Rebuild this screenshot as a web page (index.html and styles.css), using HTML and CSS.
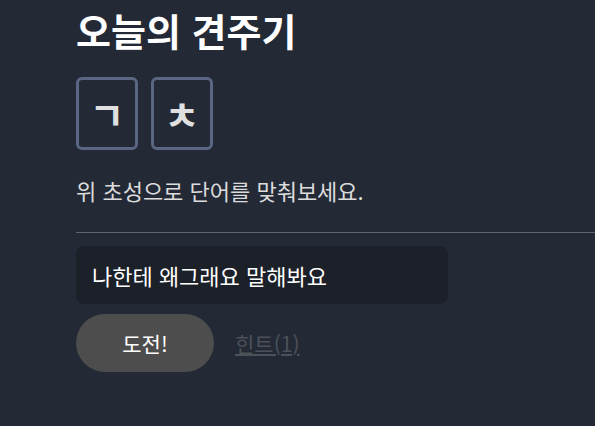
FILE: index.html
```html
<!DOCTYPE html>
<html lang="ko">
<head>
<meta charset="utf-8">
<link rel="stylesheet" href="styles.css">
</head>
<body>
<main class="page">
  <h1 class="title">오늘의 견주기</h1>
  <div class="tiles">
    <div class="tile">ㄱ</div>
    <div class="tile">ㅊ</div>
  </div>
  <p class="desc">위 초성으로 단어를 맞춰보세요.</p>
  <hr class="rule">
  <div class="answer">나한테 왜그래요 말해봐요</div>
  <div class="actions">
    <button class="go">도전!</button>
    <a class="hint">힌트(1)</a>
  </div>
</main>
</body>
</html>
```
FILE: styles.css
```css
html, body {
  margin: 0;
  padding: 0;
  background: #232a36;
  height: 100%;
  overflow: hidden;
}
body {
  font-family: "Noto Sans CJK KR", "Noto Sans", sans-serif;
  color: #e6e6e6;
}
.page {
  padding: 6px 0 0 76px;
  display: flex;
  flex-direction: column;
}
.title {
  margin: 0;
  font-size: 38px;
  line-height: 48px;
  font-weight: 700;
  color: #ffffff;
}
.tiles {
  display: flex;
  gap: 13px;
  margin-top: 23px;
}
.tile {
  box-sizing: border-box;
  width: 62px;
  height: 73px;
  border: 3px solid #5a6782;
  border-radius: 6px;
  display: flex;
  align-items: center;
  justify-content: center;
  font-size: 38px;
  line-height: 1;
  font-weight: 700;
  color: #e0e0e0;
}
.desc {
  margin: 25px 0 0;
  font-size: 22px;
  line-height: 30px;
  color: #dcdcdc;
}
.rule {
  margin: 27px 0 0;
  border: 0;
  height: 1px;
  background: #5a6577;
}
.answer {
  margin-top: 13px;
  width: 372px;
  height: 58px;
  box-sizing: border-box;
  background: #1b2029;
  border-radius: 8px;
  padding: 0 16px;
  display: flex;
  align-items: center;
  font-size: 22px;
  color: #ffffff;
}
.actions {
  margin-top: 10px;
  display: flex;
  align-items: center;
  gap: 21px;
}
.go {
  width: 138px;
  height: 58px;
  border: 0;
  border-radius: 29px;
  background: #4d4d4d;
  color: #ffffff;
  font-family: inherit;
  font-size: 21px;
  font-weight: 400;
}
.hint {
  font-size: 21px;
  color: #4c515a;
  text-decoration: underline;
}
```
